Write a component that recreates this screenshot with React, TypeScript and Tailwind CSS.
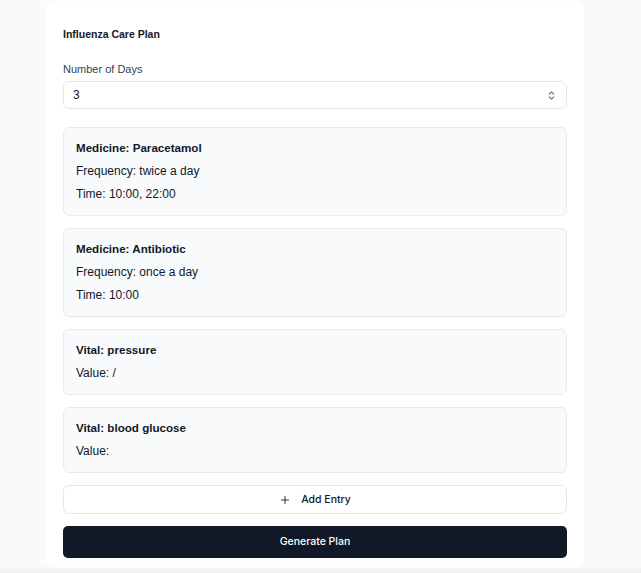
import { Plus, ChevronsUpDown } from 'lucide-react';

type Entry = {
  title: string;
  lines: string[];
};

const entries: Entry[] = [
  { title: 'Medicine: Paracetamol', lines: ['Frequency: twice a day', 'Time: 10:00, 22:00'] },
  { title: 'Medicine: Antibiotic', lines: ['Frequency: once a day', 'Time: 10:00'] },
  { title: 'Vital: pressure', lines: ['Value: /'] },
  { title: 'Vital: blood glucose', lines: ['Value:'] },
];

function EntryCard({ entry }: { entry: Entry }) {
  return (
    <div className="rounded-[6px] border border-[#e9eaee] bg-[#f9fafb] px-[12px] pt-[8px] pb-[10px] text-[12px] leading-[23px] text-[#111827]">
      <p className="text-[11.6px] font-bold">{entry.title}</p>
      {entry.lines.map((line) => (
        <p key={line} className="translate-y-[1px]">{line}</p>
      ))}
    </div>
  );
}

export default function App() {
  return (
    <div
      className="relative min-h-[573px] bg-[#f9fafb] pt-px"
      style={{ fontFamily: '"Liberation Sans", Arial, sans-serif' }}
    >
      <div className="ml-[46px] w-[538px] rounded-[8px] bg-white px-[17px] pt-[25px] pb-[10px]">
        <h2 className="text-[10.5px] font-bold leading-[16px] text-[#111827]">Influenza Care Plan</h2>

        <label className="mt-[20px] block text-[11px] leading-[14px] text-[#374151]">Number of Days</label>
        <div className="mt-[5px] flex h-[28px] items-center justify-between rounded-[6px] border border-[#e5e7eb] bg-white pl-[9px] pr-[9px] text-[12px] text-[#111827]">
          <span>3</span>
          <ChevronsUpDown className="h-[11px] w-[11px] text-[#6b7280]" strokeWidth={2.5} />
        </div>

        <div className="mt-[18px] flex flex-col gap-[12px]">
          {entries.map((e) => (
            <EntryCard key={e.title} entry={e} />
          ))}

          <button className="flex h-[29px] items-center justify-center gap-[10px] rounded-[6px] border border-[#e5e7eb] bg-white font-['Inter',sans-serif] text-[10.5px] font-medium text-[#111827]">
            <Plus className="h-[12px] w-[12px]" strokeWidth={1.8} />
            Add Entry
          </button>
          <button className="flex h-[32px] items-center justify-center rounded-[5px] bg-[#111827] font-['Inter',sans-serif] text-[10.5px] font-medium text-white">
            Generate Plan
          </button>
        </div>
      </div>

      <div className="pointer-events-none absolute bottom-0 left-0 right-0 h-[7px] bg-gradient-to-b from-transparent to-[#eceef1]" />
    </div>
  );
}
